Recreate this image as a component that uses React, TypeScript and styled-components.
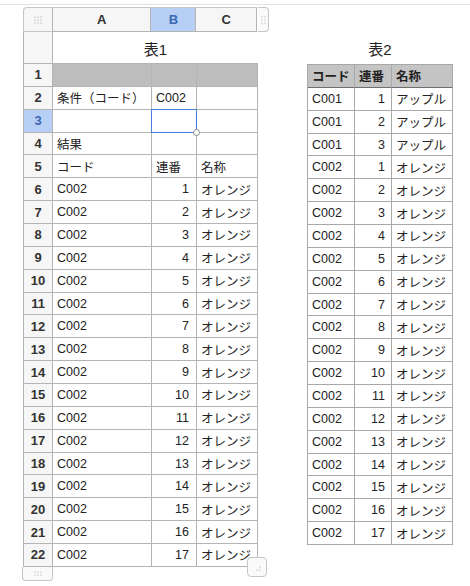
import React from 'react'
import styled, { createGlobalStyle } from 'styled-components'

const ROW_H = 22.86
const LINE = '#b4b4b4'
const HEAD_BG = '#f6f6f6'

const GlobalStyle = createGlobalStyle`
  html, body {
    margin: 0;
    padding: 0;
    background: #ffffff;
  }
  body {
    font-family: 'Liberation Sans', 'Noto Sans CJK JP', sans-serif;
    font-size: 12.5px;
    color: #222;
  }
`

const Page = styled.div`
  width: 470px;
  height: 586px;
  padding-top: 4px;
  box-sizing: border-box;
  overflow: hidden;
`

const TopRule = styled.div`
  height: 1px;
  background: #e2e2e2;
`

const Workspace = styled.div`
  display: flex;
  align-items: flex-start;
  padding-left: 23px;
  margin-top: 2px;
`

const Sheet = styled.div`
  position: relative;
  width: 246px;
`

const HeaderBar = styled.div`
  display: flex;
  height: 25px;
`

const Corner = styled.div`
  width: 30px;
  box-sizing: border-box;
  border: 1px solid #c6c6c6;
  border-right-color: ${LINE};
  border-top-left-radius: 4px;
  background: ${HEAD_BG};
  display: flex;
  align-items: center;
  justify-content: center;
`

const ColHead = styled.div<{ $w: number; $active?: boolean }>`
  width: ${(p) => p.$w}px;
  box-sizing: border-box;
  border-top: 1px solid #c6c6c6;
  border-bottom: 1px solid ${LINE};
  border-right: 1px solid ${LINE};
  background: ${(p) => (p.$active ? '#b8cff5' : HEAD_BG)};
  color: ${(p) => (p.$active ? '#3a68b6' : '#333')};
  font-weight: bold;
  font-size: 13px;
  display: flex;
  align-items: center;
  justify-content: center;
`

const SideGrip = styled.div`
  width: 11px;
  margin-left: 1px;
  box-sizing: border-box;
  border: 1px solid #c6c6c6;
  border-left: none;
  border-radius: 0 4px 4px 0;
  background: #fafafa;
  display: flex;
  align-items: center;
  justify-content: center;
`

const Grid = styled.div`
  display: grid;
  grid-template-columns: 29px 99px 45px 61px;
  grid-template-rows: 32px;
  grid-auto-rows: ${ROW_H}px;
  border-left: 1px solid ${LINE};
  width: 235px;
`

const RowHead = styled.div<{ $active?: boolean }>`
  box-sizing: border-box;
  border-right: 1px solid ${LINE};
  border-bottom: 1px solid ${LINE};
  background: ${(p) => (p.$active ? '#b8cff5' : HEAD_BG)};
  color: ${(p) => (p.$active ? '#3a68b6' : '#333')};
  font-weight: bold;
  font-size: 13px;
  display: flex;
  align-items: center;
  justify-content: center;
`

const TitleCell = styled.div`
  grid-column: 2 / 5;
  box-sizing: border-box;
  border-bottom: 1px solid ${LINE};
  font-size: 15px;
  color: #222;
  display: flex;
  align-items: center;
  justify-content: center;
  padding-top: 1px;
`

const Cell = styled.div<{ $align?: 'left' | 'right'; $fill?: string }>`
  position: relative;
  box-sizing: border-box;
  border-right: 1px solid ${LINE};
  border-bottom: 1px solid ${LINE};
  background: ${(p) => p.$fill || '#fff'};
  display: flex;
  align-items: center;
  justify-content: ${(p) => (p.$align === 'right' ? 'flex-end' : 'flex-start')};
  padding: 0 7px 0 4px;
  white-space: nowrap;
`

const Selection = styled.div`
  position: absolute;
  z-index: 2;
  left: -1px;
  top: -1px;
  right: -1px;
  bottom: -1px;
  border: 1px solid #4a7fdc;
  pointer-events: none;
`

const FillHandle = styled.div`
  position: absolute;
  right: -4px;
  bottom: -4px;
  width: 5px;
  height: 5px;
  border-radius: 50%;
  border: 1px solid #8a8a8a;
  background: #fff;
`

const BottomGrip = styled.div`
  width: 31px;
  height: 14px;
  margin-left: -1px;
  box-sizing: border-box;
  border: 1px solid #c6c6c6;
  border-top: none;
  border-radius: 0 0 4px 4px;
  background: #fafafa;
  display: flex;
  align-items: center;
  justify-content: center;
`

const ResizeGrip = styled.div`
  position: absolute;
  left: 224px;
  bottom: 4px;
  width: 20px;
  height: 20px;
  box-sizing: border-box;
  border: 1px solid #c6c6c6;
  border-radius: 4px;
  background: #fafafa;
  display: flex;
  align-items: flex-end;
  justify-content: flex-end;
  padding: 0 5px 5px 0;
`

const Table2Wrap = styled.div`
  margin-left: 38px;
  margin-top: 25px;
`

const Title2 = styled.div`
  height: 32px;
  font-size: 15px;
  display: flex;
  align-items: center;
  justify-content: center;
  padding-top: 1px;
  box-sizing: border-box;
`

const Table2 = styled.div`
  display: grid;
  grid-template-columns: 47px 37px 61px;
  grid-auto-rows: ${ROW_H}px;
  border-top: 1px solid #a8a8a8;
  border-left: 1px solid #a8a8a8;
`

const T2Cell = styled.div<{ $head?: boolean; $align?: 'left' | 'right' }>`
  box-sizing: border-box;
  border-right: 1px solid #a8a8a8;
  border-bottom: 1px solid ${(p) => (p.$head ? '#6e6e6e' : '#a8a8a8')};
  background: ${(p) => (p.$head ? '#c4c4c4' : '#fff')};
  font-weight: ${(p) => (p.$head ? 'bold' : 'normal')};
  display: flex;
  align-items: center;
  justify-content: ${(p) => (p.$align === 'right' ? 'flex-end' : 'flex-start')};
  padding: 0 6px 0 4px;
  white-space: nowrap;
`

const Dots = ({ cols, rows, gap = 3 }: { cols: number; rows: number; gap?: number }) => {
  const pts = []
  for (let r = 0; r < rows; r++)
    for (let c = 0; c < cols; c++)
      pts.push(<circle key={`${r}-${c}`} cx={1 + c * gap} cy={1 + r * gap} r={0.6} fill="#9a9a9a" />)
  return (
    <svg width={2 + (cols - 1) * gap} height={2 + (rows - 1) * gap}>
      {pts}
    </svg>
  )
}

type Row = { a?: string; b?: string; c?: string; bRight?: boolean }

const rows: Row[] = [
  {},
  { a: '条件（コード）', b: 'C002' },
  {},
  { a: '結果' },
  { a: 'コード', b: '連番', c: '名称' },
  ...Array.from({ length: 17 }, (_, i) => ({ a: 'C002', b: String(i + 1), c: 'オレンジ', bRight: true }))
]

const list2 = [
  ...[1, 2, 3].map((n) => ({ code: 'C001', no: n, name: 'アップル' })),
  ...Array.from({ length: 17 }, (_, i) => ({ code: 'C002', no: i + 1, name: 'オレンジ' }))
]

export default function App() {
  return (
    <Page>
      <GlobalStyle />
      <TopRule />
      <Workspace>
        <Sheet>
          <HeaderBar>
            <Corner>
              <Dots cols={3} rows={3} />
            </Corner>
            <ColHead $w={99}>A</ColHead>
            <ColHead $w={45} $active>
              B
            </ColHead>
            <ColHead $w={61}>C</ColHead>
            <SideGrip>
              <Dots cols={2} rows={3} />
            </SideGrip>
          </HeaderBar>
          <Grid>
            <RowHead />
            <TitleCell>表1</TitleCell>
            {rows.map((r, i) => {
              const n = i + 1
              const fill = n === 1 ? '#bdbdbd' : undefined
              return (
                <React.Fragment key={n}>
                  <RowHead $active={n === 3}>{n}</RowHead>
                  <Cell $fill={fill}>{r.a}</Cell>
                  <Cell $fill={fill} $align={r.bRight ? 'right' : 'left'}>
                    {r.b}
                    {n === 3 && (
                      <Selection>
                        <FillHandle />
                      </Selection>
                    )}
                  </Cell>
                  <Cell $fill={fill}>{r.c}</Cell>
                </React.Fragment>
              )
            })}
          </Grid>
          <BottomGrip>
            <Dots cols={3} rows={2} />
          </BottomGrip>
          <ResizeGrip>
            <svg width="5" height="5">
              <circle cx="4" cy="1" r="0.6" fill="#9a9a9a" />
              <circle cx="4" cy="4" r="0.6" fill="#9a9a9a" />
              <circle cx="1" cy="4" r="0.6" fill="#9a9a9a" />
            </svg>
          </ResizeGrip>
        </Sheet>
        <Table2Wrap>
          <Title2>表2</Title2>
          <Table2>
            <T2Cell $head>コード</T2Cell>
            <T2Cell $head>連番</T2Cell>
            <T2Cell $head>名称</T2Cell>
            {list2.map((r, i) => (
              <React.Fragment key={i}>
                <T2Cell>{r.code}</T2Cell>
                <T2Cell $align="right">{r.no}</T2Cell>
                <T2Cell>{r.name}</T2Cell>
              </React.Fragment>
            ))}
          </Table2>
        </Table2Wrap>
      </Workspace>
    </Page>
  )
}
